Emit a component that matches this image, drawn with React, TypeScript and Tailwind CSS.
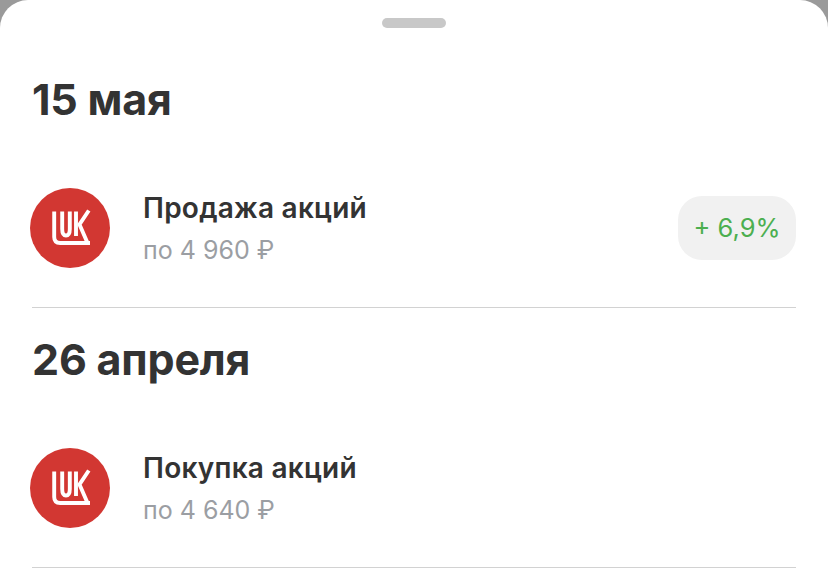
const font = { fontFamily: 'Inter, sans-serif' }

function LukoilLogo() {
  return (
    <svg width="80" height="80" viewBox="0 0 80 80" className="shrink-0">
      <circle cx="40" cy="40" r="40" fill="#d23732" />
      <g fill="none" stroke="#fff" strokeWidth="3.9">
        <path d="M24.2 23.5 V49 Q24.2 55 30.2 55 H60" />
        <path d="M32.2 23.5 V41 Q32.2 47.5 36 47.5 Q39.8 47.5 39.8 41 V23.5" />
        <path d="M46 23.5 V48" />
        <path d="M58.8 22.5 L49.5 36.5 L58 56" />
      </g>
    </svg>
  )
}

function Trade({ title, price, badge }: { title: string; price: string; badge?: string }) {
  return (
    <div className="flex h-[183px] items-center border-b border-[#d2d2d2] pt-[63px] pb-[39px]">
      <div className="-ml-[2px]">
        <LukoilLogo />
      </div>
      <div className="ml-[33px] flex-1">
        <div className="relative top-[1px] text-[28px] leading-[32px] font-semibold tracking-[0.25px] text-[#333333]">{title}</div>
        <div className="relative top-[1px] mt-[10px] text-[25px] leading-[32px] text-[#9b9ea3]">{price}</div>
      </div>
      {badge && (
        <div className="flex h-[64px] w-[118px] items-center justify-center rounded-[24px] bg-[#f1f1f1] text-[25.5px] text-[#4caf50]">
          {badge}
        </div>
      )}
    </div>
  )
}

export default function App() {
  return (
    <div className="h-[569px] w-[828px] overflow-hidden bg-[#9a9a9a]" style={font}>
      <div className="h-full rounded-t-[28px] bg-white px-[32px]">
        <div className="flex justify-center pt-[18px]">
          <div className="h-[10px] w-[64px] rounded-full bg-[#c8c8c8]" />
        </div>
        <h2 className="mt-[45px] text-[43px] leading-[52px] font-bold tracking-[-0.2px] text-[#333333]">15 мая</h2>
        <Trade title="Продажа акций" price="по 4 960 ₽" badge="+ 6,9%" />
        <h2 className="mt-[25px] text-[43px] leading-[52px] font-bold tracking-[-0.2px] text-[#333333]">26 апреля</h2>
        <Trade title="Покупка акций" price="по 4 640 ₽" />
      </div>
    </div>
  )
}
